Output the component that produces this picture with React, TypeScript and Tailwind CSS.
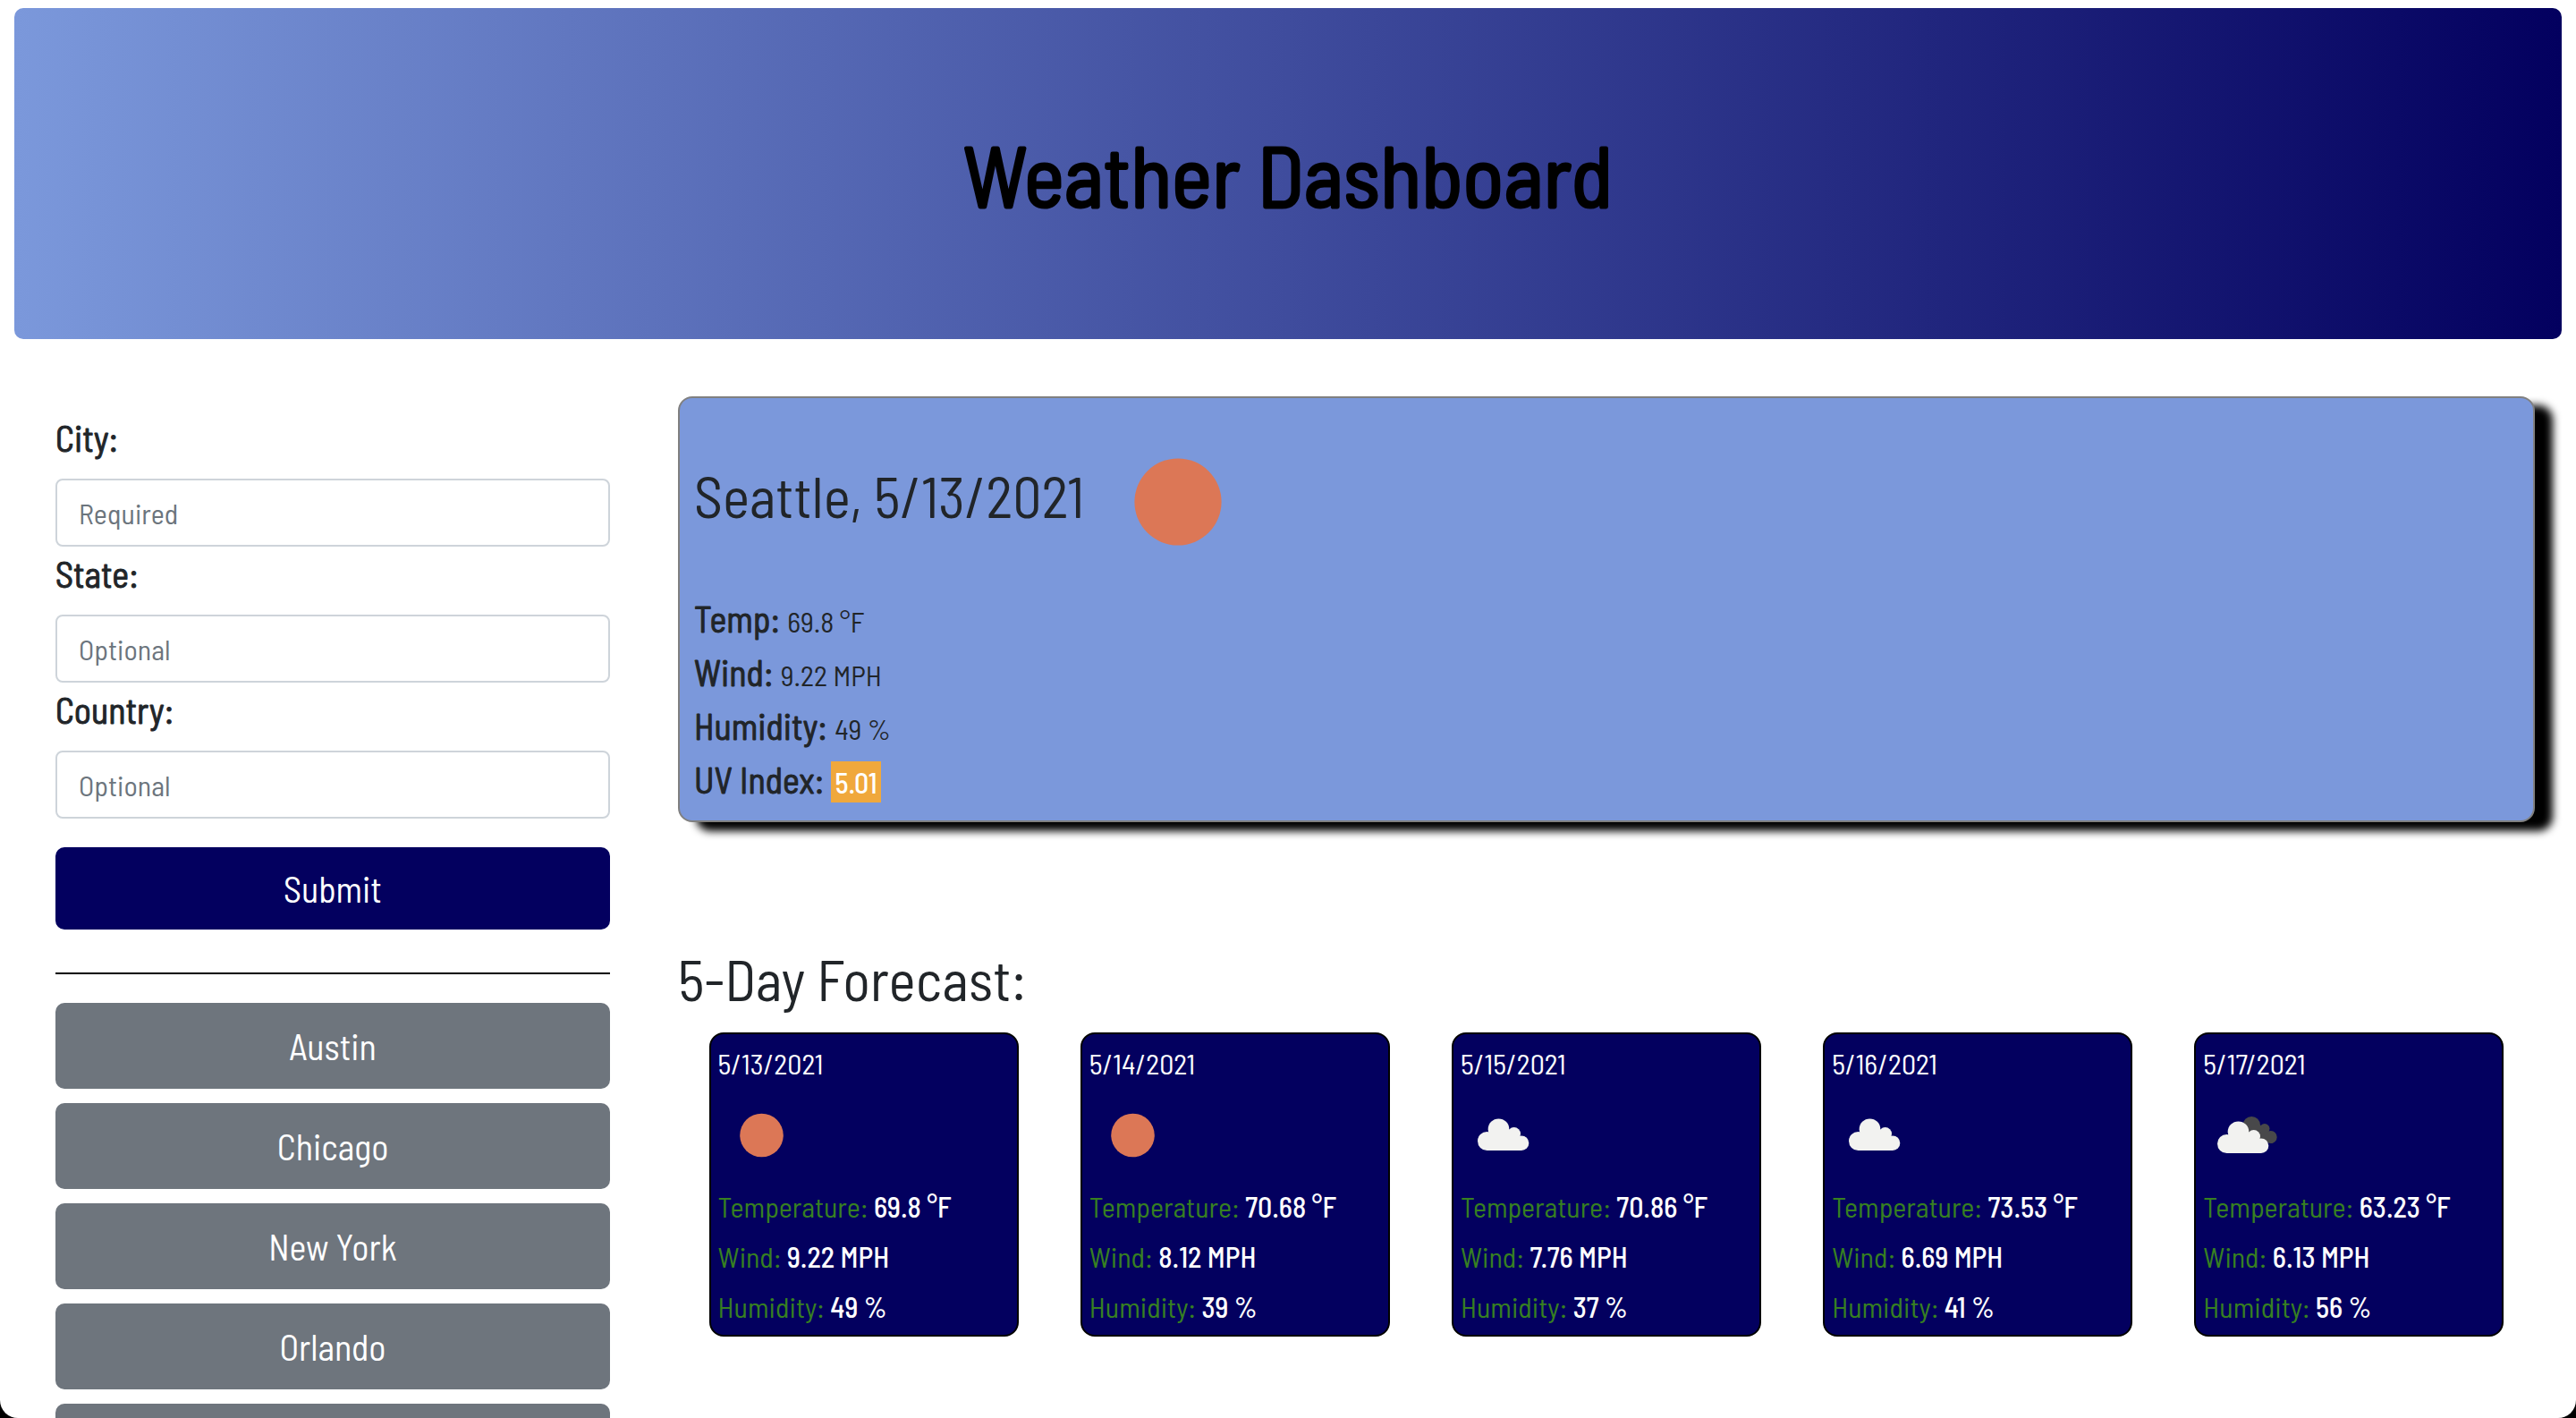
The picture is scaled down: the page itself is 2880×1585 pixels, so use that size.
import type { ReactNode } from "react";

type Sky = "clear" | "scattered" | "broken";

type Day = {
  date: string;
  sky: Sky;
  temp: string;
  wind: string;
  humidity: string;
};

const forecast: Day[] = [
  { date: "5/13/2021", sky: "clear", temp: "69.8 °F", wind: "9.22 MPH", humidity: "49 %" },
  { date: "5/14/2021", sky: "clear", temp: "70.68 °F", wind: "8.12 MPH", humidity: "39 %" },
  { date: "5/15/2021", sky: "scattered", temp: "70.86 °F", wind: "7.76 MPH", humidity: "37 %" },
  { date: "5/16/2021", sky: "scattered", temp: "73.53 °F", wind: "6.69 MPH", humidity: "41 %" },
  { date: "5/17/2021", sky: "broken", temp: "63.23 °F", wind: "6.13 MPH", humidity: "56 %" },
];

const fields = [
  { id: "city", label: "City:", placeholder: "Required" },
  { id: "state", label: "State:", placeholder: "Optional" },
  { id: "country", label: "Country:", placeholder: "Optional" },
];

const history = ["Austin", "Chicago", "New York", "Orlando", ""];

function Cloud() {
  return (
    <g fill="#f2f2f0">
      <circle cx="29.5" cy="55.5" r="10.5" />
      <circle cx="42.5" cy="42.2" r="11.8" />
      <circle cx="59.7" cy="47.3" r="7.3" />
      <circle cx="68" cy="57.7" r="8.3" />
      <path d="M29.5 66V50L36 44h20l7 10 5 3v9z" />
    </g>
  );
}

function WeatherIcon({ sky, className }: { sky: Sky; className: string }) {
  return (
    <svg viewBox="0 0 100 100" className={className} role="img" aria-label={sky}>
      {sky === "clear" && <circle cx="48.5" cy="49" r="24.3" fill="#dc7756" />}
      {sky === "scattered" && <Cloud />}
      {sky === "broken" && (
        <>
          <g fill="#48484a">
            <circle cx="54.3" cy="37.6" r="9.7" />
            <circle cx="68.9" cy="41.6" r="5.6" />
            <circle cx="75.6" cy="51" r="7.1" />
            <path d="M50 42l12-6 8 6 4 8-4 7-14-2z" />
          </g>
          <g transform="translate(-3 3)">
            <Cloud />
          </g>
        </>
      )}
    </svg>
  );
}

function Field({ id, label, placeholder }: { id: string; label: string; placeholder: string }) {
  return (
    <div>
      <label
        htmlFor={id}
        className="mb-4 block text-[40px] leading-[60px] [-webkit-text-stroke:1px_currentColor]"
      >
        {label}
      </label>
      <input
        id={id}
        type="text"
        placeholder={placeholder}
        className="block h-[76px] w-full rounded-lg border-2 border-[#ced4da] bg-white px-6 text-[32px] placeholder:text-[#6c757d]"
      />
    </div>
  );
}

function Reading({ label, children }: { label: string; children: ReactNode }) {
  return (
    <p className="text-[40px] leading-[60px]">
      <span className="[-webkit-text-stroke:1px_currentColor]">{label}</span>{" "}
      <span className="text-[32px] leading-none">{children}</span>
    </p>
  );
}

function DayCard({ day }: { day: Day }) {
  const rows = [
    ["Temperature:", day.temp],
    ["Wind:", day.wind],
    ["Humidity:", day.humidity],
  ];
  return (
    <article className="flex w-1/6 flex-col gap-2 rounded-2xl border-2 border-black bg-[#03005f] p-2 text-[32px] leading-[48px] text-white">
      <h3>{day.date}</h3>
      <WeatherIcon sky={day.sky} className="-mb-1 size-[100px]" />
      {rows.map(([name, value]) => (
        <p key={name} className="font-medium">
          <span className="font-normal text-[#378021]">{name}</span> {value}
        </p>
      ))}
    </article>
  );
}

export default function App() {
  return (
    <div className="h-screen overflow-hidden bg-black">
      <div className="max-h-full min-h-full overflow-hidden rounded-b-[20px] bg-white px-4 pt-[9px] font-['Barlow_Semi_Condensed','Roboto_Condensed','Roboto',sans-serif] text-[#212529]">
        <header className="flex h-[370px] items-center justify-center rounded-[10px] bg-linear-to-r/srgb from-[#7b98db] to-[#03005f]">
          <h1 className="text-8xl text-black [-webkit-text-stroke:3px_currentColor]">
            Weather Dashboard
          </h1>
        </header>

        <div className="grid grid-cols-[1fr_3fr] pt-16">
          <aside className="px-[46px] pt-4">
            <form onSubmit={(e) => e.preventDefault()}>
              {fields.map((f) => (
                <Field key={f.id} {...f} />
              ))}
              <button
                type="submit"
                className="mt-8 block h-[92px] w-full rounded-[10px] bg-[#03005f] text-[40px] text-white"
              >
                Submit
              </button>
            </form>
            <hr className="mt-12 mb-8 border-t-2 border-black" />
            <div className="flex flex-col gap-4">
              {history.map((city, i) => (
                <button
                  key={i}
                  type="button"
                  aria-label={city || "Recent search"}
                  className="h-24 w-full shrink-0 rounded-[10px] bg-[#6e757d] text-[40px] text-white"
                >
                  {city}
                </button>
              ))}
            </div>
          </aside>

          <main className="px-[30px]">
            <section className="rounded-2xl border-2 border-[#808080] bg-[#7b98db] px-4 pt-[18px] pb-4 shadow-[20px_10px_10px_#000]">
              <h2 className="-mb-0.5 text-[64px] leading-[77px]">
                Seattle, 5/13/2021
                <WeatherIcon sky="clear" className="ml-2 inline-block size-[200px] align-middle" />
              </h2>
              <Reading label="Temp:">69.8 °F</Reading>
              <Reading label="Wind:">9.22 MPH</Reading>
              <Reading label="Humidity:">49 %</Reading>
              <Reading label="UV Index:">
                <span className="bg-[#f0a83c] p-1 font-medium text-white">5.01</span>
              </Reading>
            </section>

            <h2 className="mt-[136px] mb-[22px] text-[64px] leading-[77px]">5-Day Forecast:</h2>
            <section className="flex justify-around">
              {forecast.map((day) => (
                <DayCard key={day.date} day={day} />
              ))}
            </section>
          </main>
        </div>
      </div>
    </div>
  );
}
